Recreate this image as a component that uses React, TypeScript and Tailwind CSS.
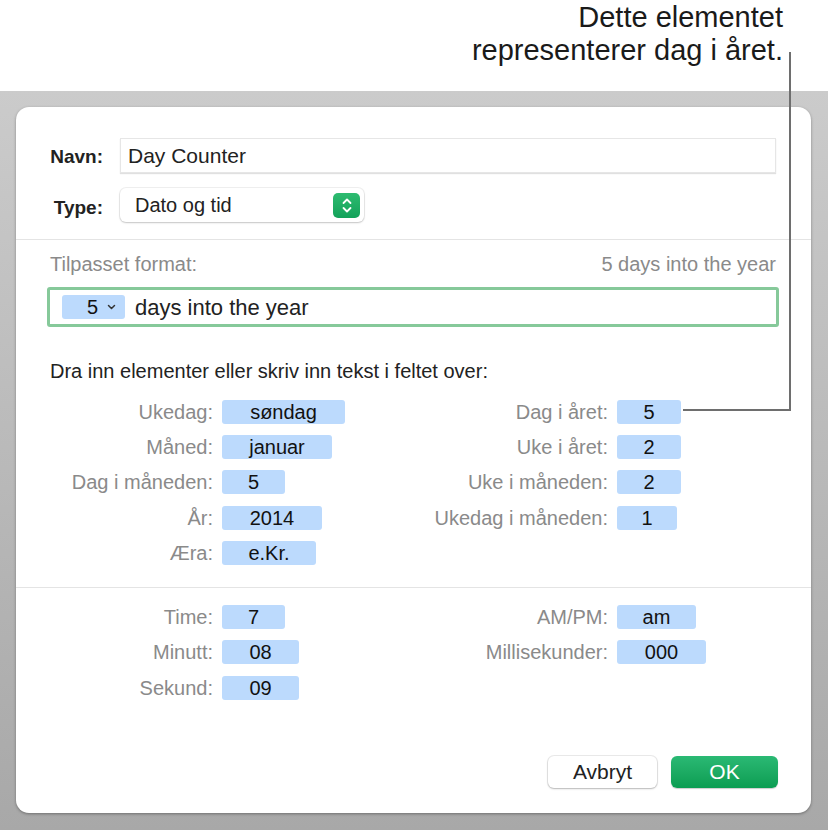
import type { ReactElement } from "react";

// --- Data ---

type Field = { label: string; value: string; w: string };

const DATE_LEFT: Field[] = [
  { label: "Ukedag:", value: "søndag", w: "w-[123px]" },
  { label: "Måned:", value: "januar", w: "w-[110px]" },
  { label: "Dag i måneden:", value: "5", w: "w-[63px]" },
  { label: "År:", value: "2014", w: "w-[100px]" },
  { label: "Æra:", value: "e.Kr.", w: "w-[94px]" },
];

const DATE_RIGHT: Field[] = [
  { label: "Dag i året:", value: "5", w: "w-[64px]" },
  { label: "Uke i året:", value: "2", w: "w-[64px]" },
  { label: "Uke i måneden:", value: "2", w: "w-[64px]" },
  { label: "Ukedag i måneden:", value: "1", w: "w-[60px]" },
];

const TIME_LEFT: Field[] = [
  { label: "Time:", value: "7", w: "w-[63px]" },
  { label: "Minutt:", value: "08", w: "w-[77px]" },
  { label: "Sekund:", value: "09", w: "w-[77px]" },
];

const TIME_RIGHT: Field[] = [
  { label: "AM/PM:", value: "am", w: "w-[79px]" },
  { label: "Millisekunder:", value: "000", w: "w-[89px]" },
];

// --- Sub-components ---

function Token({ value, w }: { value: string; w: string }): ReactElement {
  return (
    <div
      className={`${w} flex h-[24px] items-center justify-center rounded-[3px] bg-[#bcdafd] text-[20px] leading-none text-[#111]`}
    >
      {value}
    </div>
  );
}

function FieldRow({ field, labelW }: { field: Field; labelW: string }): ReactElement {
  return (
    <div className="flex h-[35.3px] items-center">
      <span className={`${labelW} pr-[9px] text-right text-[20px] leading-[24px] text-[#8a8a8a]`}>
        {field.label}
      </span>
      <Token value={field.value} w={field.w} />
    </div>
  );
}

function FieldColumns({ left, right }: { left: Field[]; right: Field[] }): ReactElement {
  return (
    <div className="flex">
      <div className="flex w-[394px] flex-col">
        {left.map((f) => (
          <FieldRow key={f.label} field={f} labelW="w-[206px]" />
        ))}
      </div>
      <div className="flex flex-col">
        {right.map((f) => (
          <FieldRow key={f.label} field={f} labelW="w-[207px]" />
        ))}
      </div>
    </div>
  );
}

function Stepper(): ReactElement {
  return (
    <div className="flex h-[25px] w-[27px] items-center justify-center rounded-[5px] bg-gradient-to-b from-[#2dbb70] to-[#12a25a]">
      <svg width="12" height="17" viewBox="0 0 12 17" fill="none">
        <path d="M2.5 6L6 2.5L9.5 6" stroke="white" strokeWidth="1.8" strokeLinecap="round" strokeLinejoin="round" />
        <path d="M2.5 11L6 14.5L9.5 11" stroke="white" strokeWidth="1.8" strokeLinecap="round" strokeLinejoin="round" />
      </svg>
    </div>
  );
}

// --- Main component ---

export default function App(): ReactElement {
  return (
    <div
      className="relative flex h-[830px] w-[828px] flex-col overflow-hidden bg-white"
      style={{ fontFamily: '"Liberation Sans", Arial, sans-serif' }}
    >
      {/* Callout */}
      <div className="h-[91px] pr-[45px] pt-[1px] text-right text-[29px] leading-[33px] text-[#1a1a1a]">
        <div>Dette elementet</div>
        <div>representerer dag i året.</div>
      </div>

      {/* Backdrop */}
      <div className="flex-1 bg-gradient-to-b from-[#cbcbcb] to-[#a8a8a8] pl-[16px] pt-[16px]">
        <div className="flex h-[706px] w-[795px] flex-col rounded-[13px] bg-white shadow-[0_1px_3px_rgba(0,0,0,0.35)]">
          {/* Name and type */}
          <div className="flex flex-col gap-[15px] pl-[34px] pr-[35px] pt-[31px]">
            <div className="flex items-center">
              <span className="w-[70px] pr-[17px] pt-[2px] text-right text-[19px] font-bold leading-[24px] text-[#222]">
                Navn:
              </span>
              <div className="flex h-[35px] flex-1 items-center border border-[#e6e6e6] pl-[7px] text-[21px] text-[#222] shadow-[0_1px_1px_rgba(0,0,0,0.12)]">
                Day Counter
              </div>
            </div>
            <div className="flex items-center">
              <span className="w-[70px] pr-[17px] pt-[6px] text-right text-[19px] font-bold leading-[24px] text-[#222]">
                Type:
              </span>
              <div className="flex h-[34px] w-[244px] items-center justify-between rounded-[6px] pl-[15px] pr-[4px] text-[20px] text-[#222] shadow-[0_0_0_1px_rgba(0,0,0,0.06),0_1px_2px_rgba(0,0,0,0.18)]">
                <span>Dato og tid</span>
                <Stepper />
              </div>
            </div>
          </div>

          <div className="mt-[17px] h-px bg-[#e4e4e4]" />

          {/* Custom format */}
          <div className="flex flex-col pl-[31px] pr-[32px] pt-[12px]">
            <div className="flex justify-between px-[3px] text-[20px] leading-[24px] text-[#8a8a8a]">
              <span>Tilpasset format:</span>
              <span>5 days into the year</span>
            </div>
            <div className="mt-[11px] flex h-[40px] items-center rounded-[3px] border-[3px] border-[#86c99a] pl-[12px]">
              <div className="flex h-[24px] w-[63px] items-center gap-[9px] rounded-[3px] bg-[#bcdafd] pl-[25px] text-[20px] text-[#111]">
                <span>5</span>
                <svg width="9" height="6" viewBox="0 0 9 6" fill="none">
                  <path d="M1.5 1.5L4.5 4.5L7.5 1.5" stroke="#333" strokeWidth="1.5" strokeLinecap="round" strokeLinejoin="round" />
                </svg>
              </div>
              <span className="ml-[10px] text-[22px] text-[#222]">days into the year</span>
            </div>
          </div>

          {/* Elements */}
          <div className="pl-[34px] pt-[32px] text-[20px] leading-[24px] text-[#222]">
            Dra inn elementer eller skriv inn tekst i feltet over:
          </div>
          <div className="pt-[11px]">
            <FieldColumns left={DATE_LEFT} right={DATE_RIGHT} />
          </div>

          <div className="mt-[17px] h-px bg-[#e4e4e4]" />

          <div className="pt-[11px]">
            <FieldColumns left={TIME_LEFT} right={TIME_RIGHT} />
          </div>

          {/* Buttons */}
          <div className="mt-auto flex justify-end gap-[14px] pb-[25px] pr-[33px]">
            <button
              type="button"
              className="h-[32px] w-[109px] rounded-[6px] bg-white text-[21px] text-[#222] shadow-[0_0_0_1px_rgba(0,0,0,0.08),0_1px_2px_rgba(0,0,0,0.22)]"
            >
              Avbryt
            </button>
            <button
              type="button"
              className="h-[32px] w-[107px] rounded-[6px] bg-gradient-to-b from-[#2ab974] to-[#0a9d52] text-[21px] text-white shadow-[0_1px_1px_rgba(0,0,0,0.2)]"
            >
              OK
            </button>
          </div>
        </div>
      </div>

      {/* Leader line from callout to "Dag i året" */}
      <div className="absolute left-[789px] top-[52px] h-[359px] w-[2px] bg-[#6e6e6e]" />
      <div className="absolute left-[683px] top-[409px] h-[2px] w-[108px] bg-[#6e6e6e]" />
    </div>
  );
}
